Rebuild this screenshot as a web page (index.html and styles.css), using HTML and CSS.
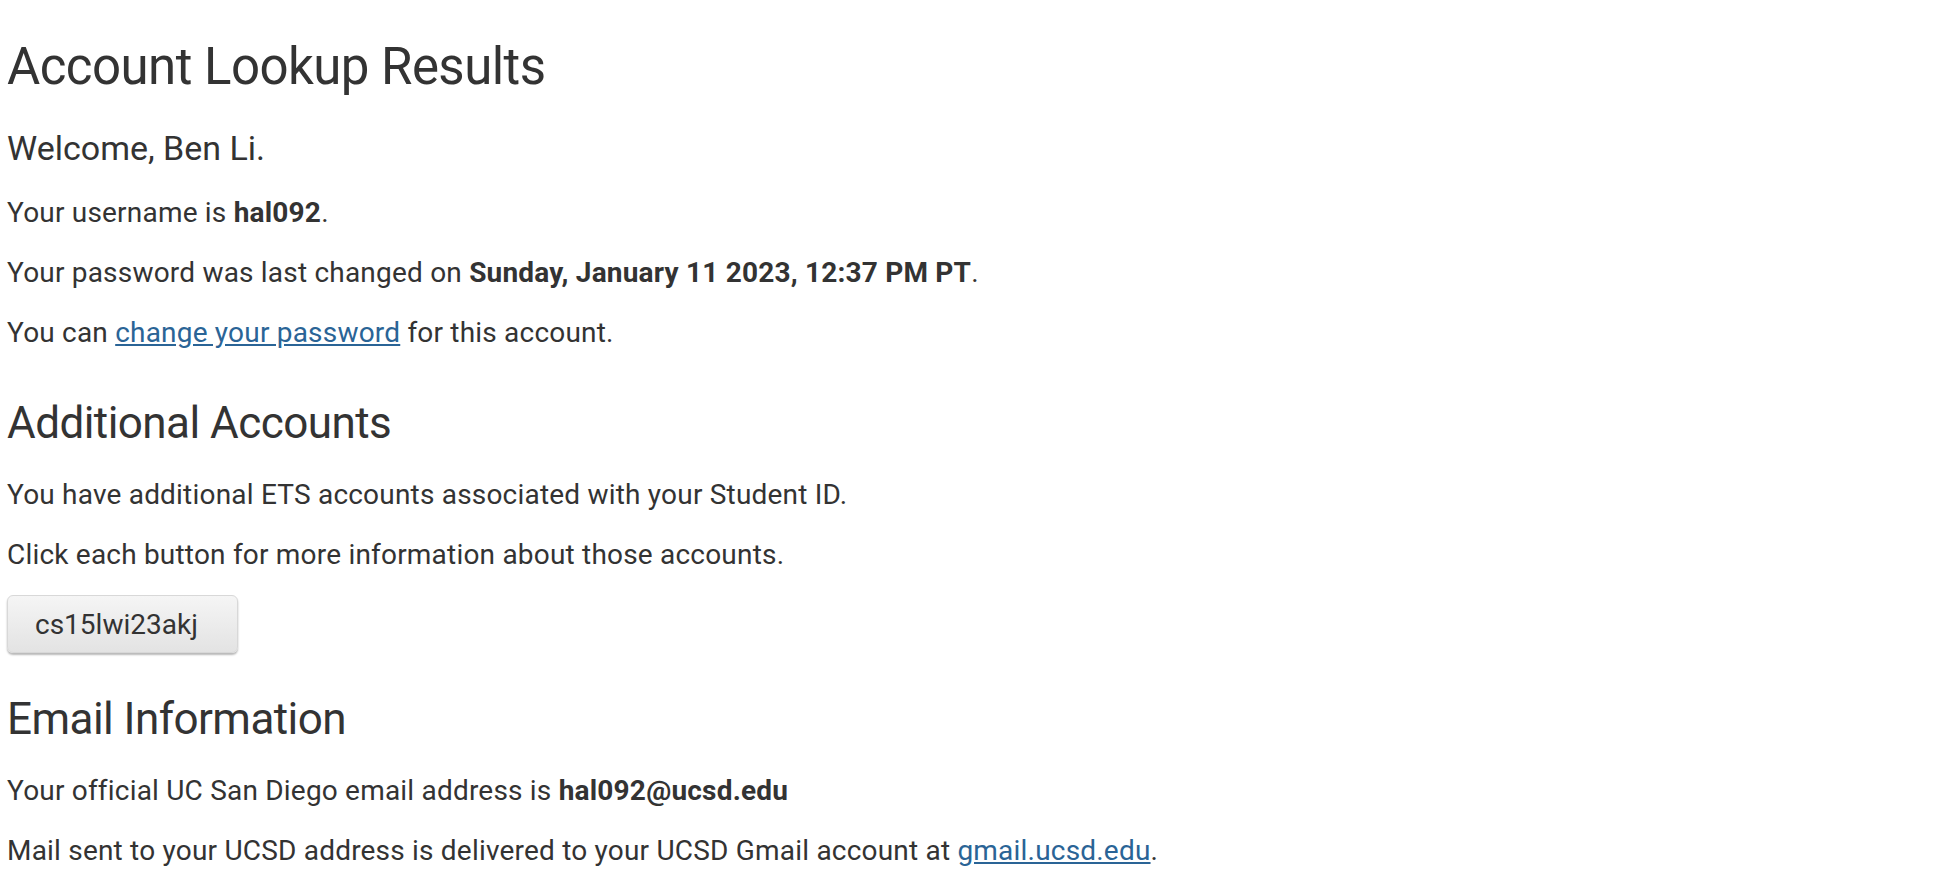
FILE: index.html
```html
<!DOCTYPE html>
<html lang="en">
<head>
<meta charset="utf-8">
<title>Account Lookup Results</title>
<link rel="stylesheet" href="styles.css">
</head>
<body>
<main class="page">
  <h1 class="title">Account Lookup Results</h1>
  <p class="welcome">Welcome, Ben Li.</p>
  <p class="text">Your username is <strong>hal092</strong>.</p>
  <p class="text">Your password was last changed on <strong>Sunday, January 11 2023, 12:37 PM PT</strong>.</p>
  <p class="text">You can <a class="link" href="#">change your password</a> for this account.</p>

  <h2 class="section-title">Additional Accounts</h2>
  <p class="text">You have additional ETS accounts associated with your Student ID.</p>
  <p class="text">Click each button for more information about those accounts.</p>
  <div class="buttons">
    <button class="btn" type="button">cs15lwi23akj</button>
  </div>

  <h2 class="section-title section-title--after-buttons">Email Information</h2>
  <p class="text">Your official UC San Diego email address is <strong>hal092@ucsd.edu</strong></p>
  <p class="text">Mail sent to your UCSD address is delivered to your UCSD Gmail account at <a class="link" href="#">gmail.ucsd.edu</a>.</p>
</main>
</body>
</html>
```
FILE: styles.css
```css
html, body {
  margin: 0;
  padding: 0;
  background: #ffffff;
}

body {
  font-family: Roboto, "Liberation Sans", Arial, sans-serif;
  color: #333333;
}

.page {
  padding: 37px 7px 0 7px;
}

.title {
  margin: 0;
  font-size: 51px;
  line-height: 60px;
  font-weight: 400;
  letter-spacing: -0.55px;
}

.welcome {
  margin: 28px 0 22px;
  font-size: 34px;
  line-height: 46px;
}

.text {
  margin: 0 0 20px;
  font-size: 28px;
  line-height: 40px;
  letter-spacing: 0.2px;
}

.text strong {
  font-weight: 700;
}

.link {
  color: #2a6496;
  text-decoration: underline;
}

.section-title {
  margin: 44px 0 26px;
  font-size: 44px;
  line-height: 52px;
  font-weight: 400;
  letter-spacing: -0.55px;
}

.section-title--after-buttons {
  margin-top: 40px;
}

.buttons {
  display: flex;
}

.btn {
  height: 58px;
  padding: 0 39px 0 27px;
  font-family: Roboto, "Liberation Sans", Arial, sans-serif;
  font-size: 28px;
  color: #333333;
  background: linear-gradient(to bottom, #f5f5f5 0%, #e3e3e3 100%);
  border: 1px solid #d8d8d8;
  border-radius: 6px;
  box-shadow: 0 2px 2px rgba(0, 0, 0, 0.28);
  cursor: pointer;
}
```
